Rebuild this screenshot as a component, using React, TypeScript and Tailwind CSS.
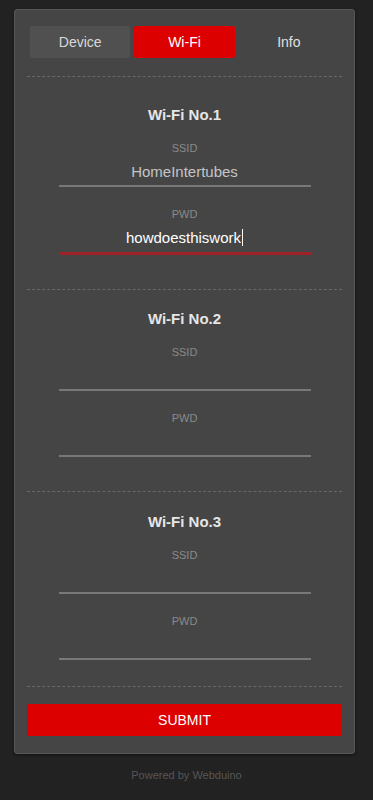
import React from "react";

const font = { fontFamily: '"Liberation Sans", Arial, sans-serif' };

function Field({ label, value, active, caret }: { label: string; value?: string; active?: boolean; caret?: boolean }) {
  return (
    <div className="flex flex-col items-center">
      <div className="h-[16px] leading-[16px] text-[11px] text-[#8a8a8a]">{label}</div>
      <div
        className={
          "mt-[6px] w-[252px] text-center leading-[20px] text-[15px] " +
          (active
            ? "h-[27px] pb-[4px] border-b-[3px] border-[#9e2228] text-white"
            : "h-[25px] pb-[3px] border-b-2 border-[#787878] text-[#c4c4c4]")
        }
      >
        {value}
        {caret ? <span className="inline-block w-[1px] h-[17px] bg-white align-[-3px] ml-[1px]" /> : null}
      </div>
    </div>
  );
}

function Section({ n, cls, ssid, pwd }: { n: number; cls: string; ssid?: string; pwd?: string }) {
  return (
    <div className={"border-t border-dashed border-[#676767] flex flex-col items-center " + cls}>
      <div className="h-[20px] leading-[20px] text-[15px] font-bold text-[#e6e6e6]">Wi-Fi No.{n}</div>
      <div className="mt-[15px]">
        <Field label="SSID" value={ssid} />
      </div>
      <div className="mt-[19px]">
        <Field label="PWD" value={pwd} active={!!pwd} caret={!!pwd} />
      </div>
    </div>
  );
}

export default function App() {
  return (
    <div className="min-h-[800px] bg-[#222222] pt-[9px]" style={font}>
      <div className="ml-[14px] w-[341px] bg-[#454545] border border-[#575757] rounded-[3px] px-[12px] pt-[16px] pb-[17px] shadow-[0_1px_3px_rgba(0,0,0,0.5)]">
        <div className="grid grid-cols-3 gap-[4px] px-[3px]">
          <div className="h-[32px] rounded-[2px] bg-[#505050] flex items-center justify-center text-[14px] text-[#d8d8d8]">Device</div>
          <div className="h-[32px] rounded-[2px] bg-[#dd0000] flex items-center justify-center text-[14px] text-white">Wi-Fi</div>
          <div className="h-[32px] rounded-[2px] flex items-center justify-center text-[14px] text-[#e0e0e0]">Info</div>
        </div>
        <div className="mt-[18px]">
          <Section n={1} cls="pt-[28px] pb-[34px]" ssid="HomeIntertubes" pwd="howdoesthiswork" />
          <Section n={2} cls="pt-[19px] pb-[34px]" />
          <Section n={3} cls="pt-[20px] pb-[26px]" />
          <div className="border-t border-dashed border-[#676767]" />
        </div>
        <div className="mt-[17px] h-[32px] bg-[#dd0000] flex items-center justify-center text-[14px] text-white">SUBMIT</div>
      </div>
      <div className="mt-[13px] h-[16px] leading-[16px] text-center text-[11px] text-[#565656]">Powered by Webduino</div>
    </div>
  );
}
